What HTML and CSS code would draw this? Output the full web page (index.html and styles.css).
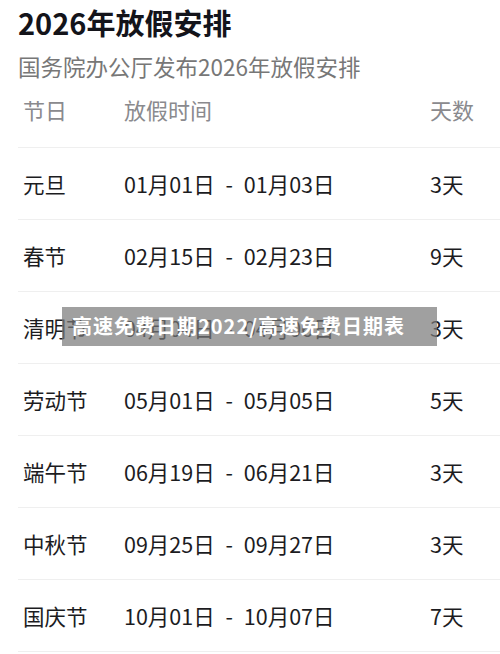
FILE: index.html
```html
<!DOCTYPE html>
<html lang="zh-CN">
<head>
    <meta charset="UTF-8">
    <meta name="viewport" content="width=device-width, initial-scale=1.0">
    <title>2026年放假安排</title>
    <link rel="stylesheet" href="styles.css">
</head>
<body>

    <div class="page">
        <h1 class="title">2026年放假安排</h1>
        <p class="subtitle">国务院办公厅发布2026年放假安排</p>

        <div class="holiday-table">
            <div class="row head">
                <span>节日</span>
                <span>放假时间</span>
                <span>天数</span>
            </div>
            <div class="row">
                <span>元旦</span>
                <span class="range">01月01日 - 01月03日</span>
                <span>3天</span>
            </div>
            <div class="row">
                <span>春节</span>
                <span class="range">02月15日 - 02月23日</span>
                <span>9天</span>
            </div>
            <div class="row">
                <span>清明节</span>
                <span class="range">04月04日 - 04月06日</span>
                <span>3天</span>
            </div>
            <div class="row">
                <span>劳动节</span>
                <span class="range">05月01日 - 05月05日</span>
                <span>5天</span>
            </div>
            <div class="row">
                <span>端午节</span>
                <span class="range">06月19日 - 06月21日</span>
                <span>3天</span>
            </div>
            <div class="row">
                <span>中秋节</span>
                <span class="range">09月25日 - 09月27日</span>
                <span>3天</span>
            </div>
            <div class="row">
                <span>国庆节</span>
                <span class="range">10月01日 - 10月07日</span>
                <span>7天</span>
            </div>
        </div>
    </div>

    <div class="caption">高速免费日期2022/高速免费日期表</div>

</body>
</html>
```

FILE: styles.css
```css
body {
    font-family: "Noto Sans CJK SC", "Noto Sans", sans-serif;
    background: #fff;
    color: #1c1c1f;
    margin: 0;
    padding: 0;
    width: 500px;
    height: 654px;
    overflow: hidden;
    position: relative;
}
.page {
    padding-left: 18px;
}
.title {
    margin: 0;
    font-size: 29px;
    font-weight: 700;
    line-height: 44px;
    color: #14141a;
}
.subtitle {
    margin: 0;
    font-size: 22.5px;
    line-height: 44px;
    color: #777;
}
.row {
    display: grid;
    grid-template-columns: 101px 306px auto;
    align-items: center;
    padding-left: 5px;
    height: 71px;
    border-bottom: 1px solid #efefef;
    font-size: 21.5px;
}
.row.head {
    height: 42px;
    padding-bottom: 17px;
    font-size: 22px;
    color: #8a8a8e;
}
.range {
    word-spacing: 6px;
}
.caption {
    position: absolute;
    left: 62px;
    top: 307px;
    width: 365px;
    height: 39px;
    padding-left: 10px;
    line-height: 38px;
    background: rgba(120, 120, 120, 0.7);
    color: #fff;
    font-size: 20px;
    font-weight: 700;
    letter-spacing: 1px;
    white-space: nowrap;
}
```
